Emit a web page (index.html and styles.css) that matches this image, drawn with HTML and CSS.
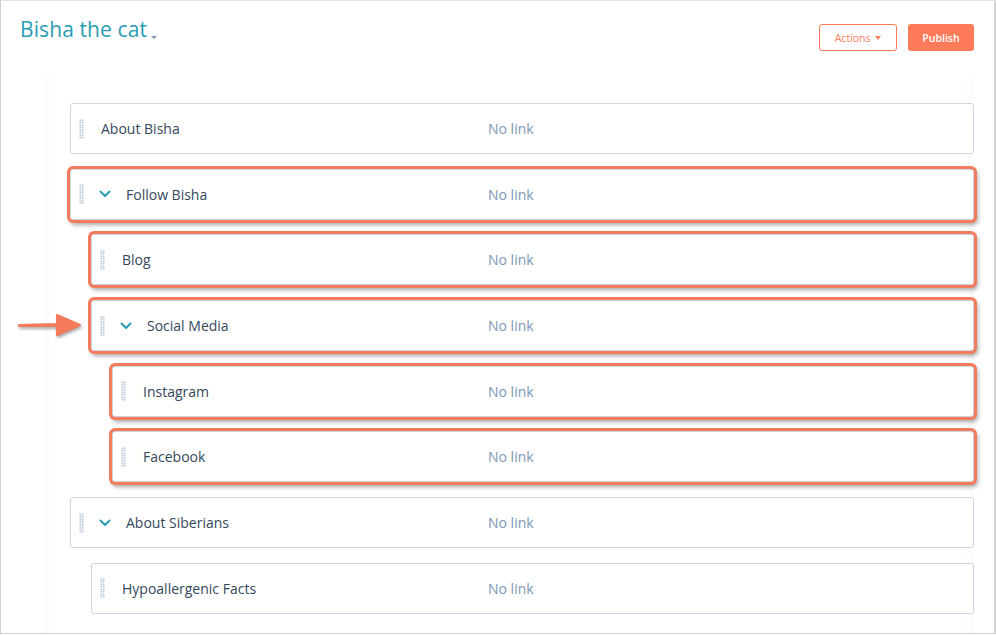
FILE: index.html
```html
<!DOCTYPE html>
<html>

<head>
    <title>Bisha the cat - Navigation menu</title>
    <link rel="stylesheet" href="styles.css">
</head>

<body>
    <div class="window">
        <div class="header">
            <h1 class="title">Bisha the cat <span class="caret"></span></h1>
            <div class="actions">
                <button class="btn btn-secondary">Actions <span class="btn-caret"></span></button>
                <button class="btn btn-primary">Publish</button>
            </div>
        </div>

        <div class="panel">
            <div class="menu-item level-0">
                <span class="grip"></span>
                <span class="name">About Bisha</span>
                <span class="link">No link</span>
            </div>
            <div class="menu-item level-0 highlight">
                <span class="grip"></span>
                <span class="chevron"><svg width="12" height="8" viewBox="0 0 12 8"><path d="M1.5 1.5 L6 6 L10.5 1.5" fill="none" stroke="#2a9cb4" stroke-width="2" stroke-linecap="round" stroke-linejoin="round"/></svg></span>
                <span class="name">Follow Bisha</span>
                <span class="link">No link</span>
            </div>
            <div class="menu-item level-1 highlight">
                <span class="grip"></span>
                <span class="name">Blog</span>
                <span class="link">No link</span>
            </div>
            <div class="menu-item level-1 highlight">
                <span class="grip"></span>
                <span class="chevron"><svg width="12" height="8" viewBox="0 0 12 8"><path d="M1.5 1.5 L6 6 L10.5 1.5" fill="none" stroke="#2a9cb4" stroke-width="2" stroke-linecap="round" stroke-linejoin="round"/></svg></span>
                <span class="name">Social Media</span>
                <span class="link">No link</span>
                <svg class="pointer" width="66" height="26" viewBox="0 0 66 26">
                    <path d="M2 13 L40 12 L40 3 L63 13 L40 23 L40 14 L2 14 Z" fill="#f47b5b" stroke="#f47b5b" stroke-width="2" stroke-linejoin="round"/>
                </svg>
            </div>
            <div class="menu-item level-2 highlight">
                <span class="grip"></span>
                <span class="name">Instagram</span>
                <span class="link">No link</span>
            </div>
            <div class="menu-item level-2 highlight">
                <span class="grip"></span>
                <span class="name">Facebook</span>
                <span class="link">No link</span>
            </div>
            <div class="menu-item level-0">
                <span class="grip"></span>
                <span class="chevron"><svg width="12" height="8" viewBox="0 0 12 8"><path d="M1.5 1.5 L6 6 L10.5 1.5" fill="none" stroke="#2a9cb4" stroke-width="2" stroke-linecap="round" stroke-linejoin="round"/></svg></span>
                <span class="name">About Siberians</span>
                <span class="link">No link</span>
            </div>
            <div class="menu-item level-1">
                <span class="grip"></span>
                <span class="name">Hypoallergenic Facts</span>
                <span class="link">No link</span>
            </div>
        </div>
    </div>
</body>

</html>
```

FILE: styles.css
```css
body {
    margin: 0;
    background-color: #fff;
    font-family: "Open Sans", "Noto Sans", sans-serif;
    color: #33475b;
}

.window {
    box-sizing: border-box;
    width: 995px;
    height: 634px;
    border: 1px solid #d0d0d0;
    border-top-color: #e4e4e4;
    box-shadow: 1px 1px 2px rgba(0, 0, 0, 0.25);
    background-color: #fff;
    overflow: hidden;
}

.header {
    box-sizing: border-box;
    display: flex;
    justify-content: space-between;
    align-items: flex-start;
    padding: 14px 20px 0 19px;
    height: 74px;
}

.title {
    margin: 0;
    font-size: 21px;
    font-weight: 400;
    color: #2a9cb4;
    letter-spacing: 0.1px;
}

.caret {
    display: inline-block;
    width: 0;
    height: 0;
    margin-left: -2px;
    border-left: 3px solid transparent;
    border-right: 3px solid transparent;
    border-top: 3px solid #7c98b6;
    vertical-align: -2px;
}

.actions {
    display: flex;
    gap: 11px;
    margin-top: 9px;
}

.btn {
    height: 27px;
    font-family: "Open Sans", sans-serif;
    font-size: 10.5px;
    border-radius: 3px;
    cursor: pointer;
}

.btn-secondary {
    width: 78px;
    background-color: #fff;
    color: #ff7a59;
    border: 1px solid #ff7a59;
}

.btn-caret {
    display: inline-block;
    width: 0;
    height: 0;
    margin-left: 2px;
    border-left: 3.5px solid transparent;
    border-right: 3.5px solid transparent;
    border-top: 4px solid #ff7a59;
    vertical-align: 2px;
}

.btn-primary {
    width: 66px;
    background-color: #ff7a59;
    color: #fff;
    border: none;
    font-weight: 600;
}

.panel {
    margin: 0 20px 0 42px;
    padding: 28px 0 0 27px;
    height: 560px;
    background: linear-gradient(to right, #fafbfc, #fff 10px, #fff calc(100% - 10px), #fafbfc);
}

.menu-item {
    position: relative;
    box-sizing: border-box;
    display: flex;
    align-items: center;
    height: 51px;
    margin-bottom: 14.7px;
    background-color: #fff;
    border: 1px solid #cbd6e2;
    border-radius: 3px;
    font-size: 14px;
}

.level-0 {
    margin-left: 0;
}

.level-1 {
    margin-left: 21px;
}

.level-2 {
    margin-left: 42px;
}

.highlight {
    box-shadow: 0 0 0 3px #f47b5b, 2px 3px 4px 2px rgba(0, 0, 0, 0.35);
}

.grip {
    width: 5px;
    height: 20px;
    margin-left: 8px;
    background-image: radial-gradient(circle, #c5d2df 0.9px, transparent 1px);
    background-size: 2.5px 2.5px;
}

.chevron {
    display: flex;
    margin-left: 15px;
    margin-right: -5px;
}

.name {
    margin-left: 17px;
}

.level-0 .name {
    width: 387px;
}

.level-0 .chevron + .name {
    margin-left: 20px;
    width: 362px;
}

.level-1 .name {
    width: 366px;
}

.level-1 .chevron + .name {
    margin-left: 20px;
    width: 341px;
}

.level-2 .name {
    width: 345px;
}

.link {
    color: #7c98b6;
}

.pointer {
    position: absolute;
    left: -75px;
    top: 11px;
    filter: drop-shadow(1px 2px 1.5px rgba(0, 0, 0, 0.35));
}
```
